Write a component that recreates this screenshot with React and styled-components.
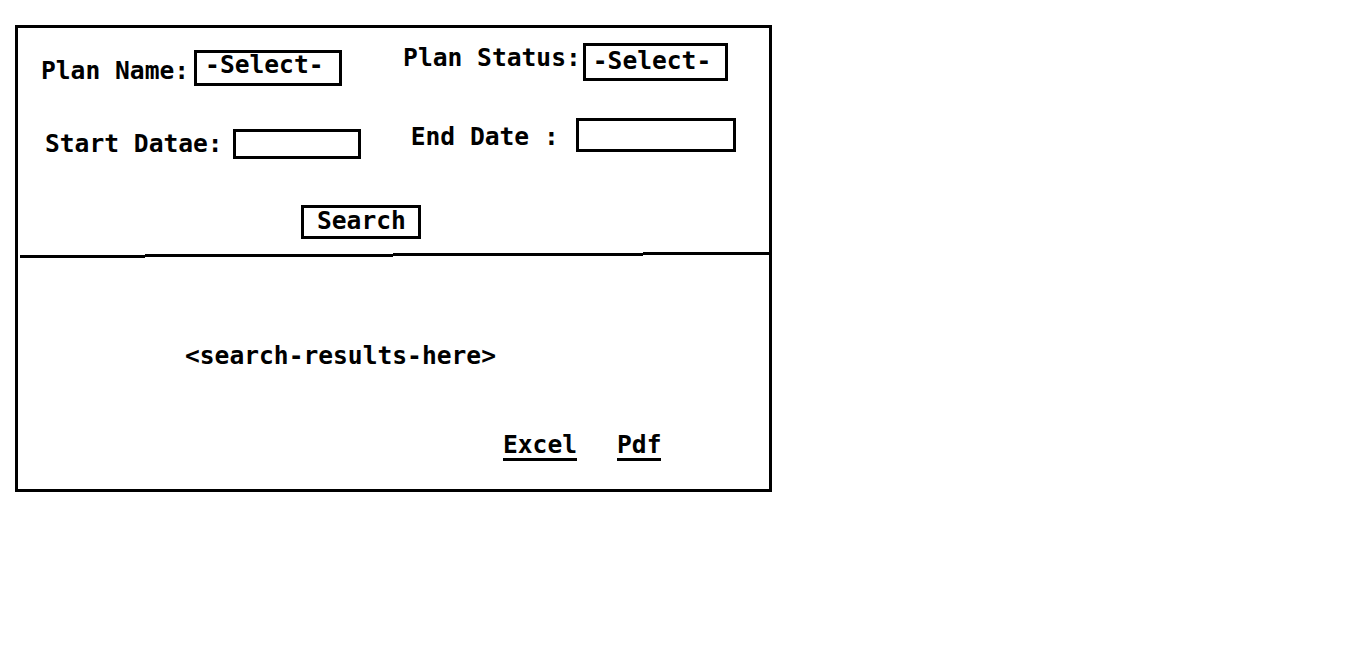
import React from 'react';
import styled, { createGlobalStyle } from 'styled-components';

const GlobalStyle = createGlobalStyle`
  body {
    margin: 0;
    background: #fff;
    font-family: "DejaVu Sans Mono", "Liberation Mono", monospace;
    font-weight: bold;
    font-size: 24.6px;
    color: #000;
  }
`;

const Frame = styled.div`
  box-sizing: border-box;
  width: 757px;
  height: 467px;
  margin: 25px 0 0 15px;
  border: 3px solid #000;
`;

const Row = styled.div`
  display: flex;
  align-items: flex-start;
  margin-top: ${p => p.top}px;
`;

const Field = styled.div`
  display: flex;
  align-items: flex-start;
  margin-top: ${p => p.top || 0}px;
  margin-left: ${p => p.left || 0}px;
`;

const Label = styled.span`
  line-height: 28px;
  white-space: pre;
  margin-top: ${p => p.top || 0}px;
  margin-right: ${p => p.gap}px;
`;

const InputBox = styled.div`
  box-sizing: border-box;
  width: ${p => p.w}px;
  height: ${p => p.h}px;
  margin-top: ${p => p.top || 0}px;
  border: 3px solid #000;
  padding: ${p => p.padTop || 0}px 0 0 ${p => p.padLeft || 0}px;
  line-height: 20px;
  white-space: pre;
`;

const SearchButton = styled.div`
  box-sizing: border-box;
  width: 120px;
  height: 34px;
  margin: 46px 0 0 283px;
  border: 3px solid #000;
  padding: 3px 0 0 13px;
  line-height: 20px;
`;

const Divider = styled.div`
  display: flex;
  align-items: flex-start;
  height: 6px;
  margin: 13px 0 0 2px;
`;

const DividerSegment = styled.div`
  width: ${p => p.w}px;
  height: 3px;
  margin-top: ${p => p.drop}px;
  background: #000;
`;

const Results = styled.div`
  line-height: 28px;
  margin: 84px 0 0 167px;
`;

const Exports = styled.div`
  display: flex;
  gap: 40px;
  margin: 62px 0 0 485px;
`;

const ExportLink = styled.span`
  display: inline-block;
  line-height: 26px;
  border-bottom: 3px solid #000;
`;

export default function App() {
  return (
    <>
      <GlobalStyle />
      <Frame>
        <Row top={15}>
          <Field left={23} top={7}>
            <Label top={7} gap={5}>Plan Name:</Label>
            <InputBox w={148} h={36} padTop={2} padLeft={8}>-Select-</InputBox>
          </Field>
          <Field left={61}>
            <Label top={1} gap={2}>Plan Status:</Label>
            <InputBox w={145} h={38} padTop={5} padLeft={7}>-Select-</InputBox>
          </Field>
        </Row>
        <Row top={32}>
          <Field left={27} top={10}>
            <Label top={2} gap={10}>Start Datae:</Label>
            <InputBox w={128} h={30} top={1} />
          </Field>
          <Field left={50}>
            <Label top={5} gap={17}>End Date :</Label>
            <InputBox w={160} h={34} />
          </Field>
        </Row>
        <SearchButton>Search</SearchButton>
        <Divider>
          <DividerSegment w={125} drop={3} />
          <DividerSegment w={248} drop={2} />
          <DividerSegment w={250} drop={1} />
          <DividerSegment w={126} drop={0} />
        </Divider>
        <Results>&lt;search-results-here&gt;</Results>
        <Exports>
          <ExportLink>Excel</ExportLink>
          <ExportLink>Pdf</ExportLink>
        </Exports>
      </Frame>
    </>
  );
}
